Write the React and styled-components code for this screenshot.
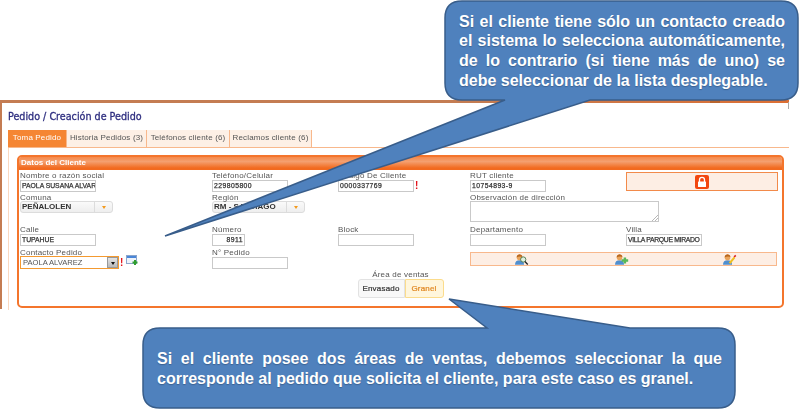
import React from "react";
import styled, { createGlobalStyle } from "styled-components";

const Global = createGlobalStyle`
  html, body { margin: 0; padding: 0; background: #fff; }
  * { box-sizing: border-box; }
`;

const Page = styled.div`
  position: relative;
  width: 800px;
  height: 409px;
  overflow: hidden;
  padding-top: 100px;
  font-family: "Liberation Sans", Arial, sans-serif;
  font-size: 8px;
  color: #444;
`;

const Screen = styled.div`
  position: relative;
  width: 789px;
  height: 209px;
  border-left: 2px solid #c47c52;
  border-top: 3px solid transparent;
  border-image: linear-gradient(90deg, #c47c52 60%, #dd6f33 100%) 1;
  padding-left: 6px;
  filter: blur(0.3px);
  &::before {
    content: "";
    position: absolute;
    left: 708px;
    top: -3px;
    width: 10px;
    height: 3px;
    background: #b9652e;
  }
  &::after {
    content: "";
    position: absolute;
    right: 0;
    top: -1px;
    width: 1px;
    height: 7px;
    background: #aaa;
  }
`;

const Title = styled.h1`
  margin: 0;
  height: 27px;
  padding-top: 8px;
  font-family: "DejaVu Sans", Verdana, sans-serif;
  font-size: 9.6px;
  line-height: 12px;
  font-weight: 400;
  color: #2f2f80;
  -webkit-text-stroke: 0.3px #2f2f80;
`;

const Tabs = styled.div`
  display: flex;
  height: 18px;
  border-bottom: 1px solid #f8b88c;
`;

const Tab = styled.div`
  width: ${(p) => p.$w}px;
  height: 17px;
  line-height: 16px;
  text-align: center;
  font-size: 8px;
  letter-spacing: 0.15px;
  color: ${(p) => (p.$active ? "#fff" : "#555")};
  background: ${(p) => (p.$active ? "#f58634" : "#fdf0e6")};
  border-right: 1px solid #f8b88c;
`;

const TabBody = styled.div`
  height: 162px;
  border-left: 1px solid #fad9c1;
  padding: 7px 0 0 8px;
`;

const Card = styled.section`
  width: 767px;
  height: 153px;
  border: 2px solid #f4752c;
  border-radius: 5px;
  background: #fff;
`;

const CardHead = styled.div`
  height: 13px;
  padding-left: 2px;
  border-radius: 2px 2px 0 0;
  background: linear-gradient(#f6894a, #f4a070 35%, #f26a1f 85%);
  color: #fff;
  font-size: 8px;
  font-weight: 700;
  line-height: 11px;
`;

const FormGrid = styled.div`
  display: grid;
  grid-template-columns: 192px 126px 132px 156px 152px;
  grid-template-rows: 22px 32px 23px 23px;
  padding-left: 1px;
`;

const Field = styled.div`
  grid-column: ${(p) => p.$col} / span ${(p) => p.$span || 1};
  grid-row: ${(p) => p.$row};
  min-width: 0;
`;

const Label = styled.div`
  height: 10px;
  padding-top: 1px;
  line-height: 10px;
  font-size: 8px;
  letter-spacing: 0.2px;
  color: #555;
  white-space: nowrap;
`;

const InputRow = styled.div`
  display: flex;
  align-items: flex-start;
  gap: 1px;
`;

const Input = styled.div`
  width: ${(p) => p.$w || 76}px;
  height: 12px;
  border: 1px solid #c9c9c9;
  padding: 0 1px;
  background: #fff;
  color: #333;
  font-size: 6.8px;
  letter-spacing: ${(p) => p.$track || 0}px;
  -webkit-text-stroke: 0.25px #333;
  line-height: 10px;
  white-space: nowrap;
  overflow: hidden;
  text-align: ${(p) => p.$align || "left"};
`;

const Required = styled.span`
  color: #e3141c;
  font-size: 10px;
  font-weight: 700;
  line-height: 11px;
`;

const Combo = styled.div`
  display: flex;
  width: 93px;
  height: 12px;
  margin-top: -1px;
  border: 1px solid #dcdcdc;
  border-radius: 3px;
  background: linear-gradient(#fafafa, #eee);
  color: #333;
  font-size: 8px;
  font-weight: 700;
  line-height: 10px;
  padding-left: 1px;
`;

const ComboText = styled.span`
  flex: 1;
  white-space: nowrap;
`;

const ComboArrow = styled.span`
  width: 18px;
  display: flex;
  align-items: center;
  justify-content: center;
  border-left: 1px solid #dcdcdc;
  &::after {
    content: "";
    border: 2.5px solid transparent;
    border-top: 3px solid #f39a1e;
    margin-top: 3px;
  }
`;

const TextArea = styled.div`
  position: relative;
  width: 189px;
  height: 21px;
  margin-top: -1px;
  border: 1px solid #c9c9c9;
  background: #fff;
`;

const Grip = styled.svg`
  position: absolute;
  right: 0;
  bottom: 0;
`;

const LockBox = styled.div`
  grid-column: 5;
  grid-row: 1;
  width: 152px;
  height: 19px;
  margin-top: 2px;
  display: flex;
  align-items: center;
  justify-content: center;
  border: 1px solid #f28a4a;
  background: #fdeee4;
`;

const Select = styled.div`
  display: flex;
  width: 99px;
  height: 13px;
  margin-top: -1px;
  border: 1px solid #f49a30;
  background: #fff;
  color: #555;
  font-size: 7.6px;
  line-height: 11px;
  padding-left: 2px;
  white-space: nowrap;
`;

const SelectText = styled.span`
  flex: 1;
`;

const SelectButton = styled.span`
  width: 11px;
  display: flex;
  align-items: center;
  justify-content: center;
  background: linear-gradient(#e4e4e4, #b9b9b9);
  border: 1px solid #999;
  &::after {
    content: "";
    border: 2.5px solid transparent;
    border-top: 3px solid #111;
    margin-top: 3px;
  }
`;

const AddIcon = styled.svg`
  margin-left: 2px;
  margin-top: -2px;
`;

const ActionBar = styled.div`
  grid-column: 4 / span 2;
  grid-row: 4;
  width: 307px;
  height: 14px;
  margin-top: 5px;
  padding-left: 44px;
  display: grid;
  grid-template-columns: 100px 108px 1fr;
  align-items: center;
  justify-items: start;
  border: 1px solid #f8b88c;
  background: #fdeee4;
`;

const AreaBlock = styled.div`
  display: flex;
  flex-direction: column;
  align-items: center;
`;

const AreaLabel = styled.div`
  height: 9px;
  line-height: 9px;
  font-size: 8px;
  letter-spacing: 0.2px;
  color: #555;
`;

const Segments = styled.div`
  display: flex;
  height: 19px;
`;

const Segment = styled.div`
  width: ${(p) => p.$w}px;
  line-height: 17px;
  text-align: center;
  font-size: 8px;
  letter-spacing: 0.2px;
  -webkit-text-stroke: 0.2px ${(p) => (p.$on ? "#e0861e" : "#333")};
  border: 1px solid ${(p) => (p.$on ? "#fbdc8c" : "#e2e2e2")};
  border-radius: ${(p) => (p.$on ? "0 3px 3px 0" : "3px 0 0 3px")};
  background: ${(p) => (p.$on ? "#fff6dc" : "#f8f8f8")};
  color: ${(p) => (p.$on ? "#e0861e" : "#333")};
`;

const Overlay = styled.svg`
  position: absolute;
  inset: 0;
  width: 800px;
  height: 409px;
`;

const CalloutText = styled.p`
  position: absolute;
  left: ${(p) => p.$x}px;
  top: ${(p) => p.$y}px;
  width: ${(p) => p.$w}px;
  margin: 0;
  color: #fff;
  font-family: "Liberation Sans", Arial, sans-serif;
  font-weight: 700;
  font-size: ${(p) => p.$size}px;
  line-height: 19.7px;
  text-align: justify;
  text-shadow: 0 1px 1px rgba(30, 50, 80, 0.4);
`;

const Person = ({ children }) => (
  <svg width="14" height="11" viewBox="0 0 17 13">
    <path d="M0 13c0-4 2-5.500 5.500-5.500S11 9 11 13z" fill="#4f8fd0" />
    <circle cx="5.500" cy="4" r="3.400" fill="#e9a45c" />
    <path d="M2 4C2 1 4 0 5.500 0S9 1 9 3.500C7.500 2.500 4 2.500 2 4z" fill="#b8661c" />
    {children}
  </svg>
);

const App = () => (
  <>
    <Global />
    <Page>
      <Screen>
        <Title>Pedido / Creación de Pedido</Title>
        <Tabs>
          <Tab $w={59} $active>Toma Pedido</Tab>
          <Tab $w={80}>Historia Pedidos (3)</Tab>
          <Tab $w={83}>Teléfonos cliente (6)</Tab>
          <Tab $w={82}>Reclamos cliente (6)</Tab>
        </Tabs>
        <TabBody>
          <Card>
            <CardHead>Datos del Cliente</CardHead>
            <FormGrid>
              <Field $col={1} $row={1}>
                <Label>Nombre o razón social</Label>
                <Input>PAOLA SUSANA ALVAR</Input>
              </Field>
              <Field $col={2} $row={1}>
                <Label>Teléfono/Celular</Label>
                <Input $track={0.45}>229805800</Input>
              </Field>
              <Field $col={3} $row={1}>
                <Label>Código De Cliente</Label>
                <InputRow>
                  <Input $track={0.45}>0000337769</Input>
                  <Required>!</Required>
                </InputRow>
              </Field>
              <Field $col={4} $row={1}>
                <Label>RUT cliente</Label>
                <Input $track={0.45}>10754893-9</Input>
              </Field>
              <LockBox>
                <svg width="14" height="14" viewBox="0 0 14 14">
                  <rect width="14" height="14" rx="2" fill="#f2470f" />
                  <path d="M4.500 7V4.800a2.500 2.500 0 0 1 5 0V7" fill="none" stroke="#fff" strokeWidth="1.300" />
                  <rect x="3" y="6.500" width="8" height="5.500" rx="0.600" fill="#fff" />
                </svg>
              </LockBox>

              <Field $col={1} $row={2}>
                <Label>Comuna</Label>
                <Combo><ComboText>PEÑALOLEN</ComboText><ComboArrow /></Combo>
              </Field>
              <Field $col={2} $row={2}>
                <Label>Región</Label>
                <Combo><ComboText>RM - SANTIAGO</ComboText><ComboArrow /></Combo>
              </Field>
              <Field $col={4} $span={2} $row={2}>
                <Label>Observación de dirección</Label>
                <TextArea>
                  <Grip width="6" height="6" viewBox="0 0 6 6">
                    <path d="M6 0L0 6M6 3L3 6" stroke="#999" strokeWidth="0.700" />
                  </Grip>
                </TextArea>
              </Field>

              <Field $col={1} $row={3}>
                <Label>Calle</Label>
                <Input>TUPAHUE</Input>
              </Field>
              <Field $col={2} $row={3}>
                <Label>Número</Label>
                <Input $w={33} $align="right" $track={0.45}>8911</Input>
              </Field>
              <Field $col={3} $row={3}>
                <Label>Block</Label>
                <Input />
              </Field>
              <Field $col={4} $row={3}>
                <Label>Departamento</Label>
                <Input />
              </Field>
              <Field $col={5} $row={3}>
                <Label>Villa</Label>
                <Input $track={-0.3}>VILLA PARQUE MIRADO</Input>
              </Field>

              <Field $col={1} $row={4}>
                <Label>Contacto Pedido</Label>
                <InputRow>
                  <Select><SelectText>PAOLA ALVAREZ</SelectText><SelectButton /></Select>
                  <Required>!</Required>
                  <AddIcon width="12" height="11" viewBox="0 0 12 11">
                    <rect x="0.500" y="0.500" width="10" height="8" fill="#eef3fa" stroke="#8ba6cc" />
                    <rect x="1" y="1" width="9" height="2" fill="#4a86d8" />
                    <path d="M6.500 7.500h5M9 5v5" stroke="#2f9e2f" strokeWidth="2" fill="none" />
                  </AddIcon>
                </InputRow>
              </Field>
              <Field $col={2} $row={4}>
                <Label>N° Pedido</Label>
                <Input />
              </Field>
              <ActionBar>
                <Person>
                  <circle cx="10" cy="6.500" r="3.200" fill="#dff0df" stroke="#3d6b3d" />
                  <path d="M12 9l3.500 3.500" stroke="#222" strokeWidth="1.600" />
                </Person>
                <Person>
                  <path d="M12 4v7.500M8 7.700h8" stroke="#58b858" strokeWidth="3" />
                </Person>
                <Person>
                  <path d="M8 11l6-7" stroke="#f0c020" strokeWidth="2.500" />
                  <path d="M13.500 3.500l2-2" stroke="#d22" strokeWidth="2" />
                </Person>
              </ActionBar>
            </FormGrid>
            <AreaBlock>
              <AreaLabel>Área de ventas</AreaLabel>
              <Segments>
                <Segment $w={47}>Envasado</Segment>
                <Segment $w={39} $on>Granel</Segment>
              </Segments>
            </AreaBlock>
          </Card>
        </TabBody>
      </Screen>

      <Overlay viewBox="0 0 800 409">
        <path
          d="M462 1H781Q798 1 798 18V83Q798 100 781 100H590L165 236L505 100H462Q445 100 445 83V18Q445 1 462 1Z"
          fill="#4f81bd"
          stroke="#385d8a"
          strokeWidth="1.500"
        />
        <path
          d="M160 328H487L449 299L630 328H718Q735 328 735 345V391Q735 408 718 408H160Q143 408 143 391V345Q143 328 160 328Z"
          fill="#4f81bd"
          stroke="#385d8a"
          strokeWidth="1.500"
        />
      </Overlay>
      <CalloutText $x={459} $y={11.500} $w={326} $size={16}>
        Si el cliente tiene sólo un contacto creado el sistema lo selecciona automáticamente, de lo contrario (si tiene más de uno) se debe seleccionar de la lista desplegable.
      </CalloutText>
      <CalloutText $x={157} $y={349} $w={565} $size={16}>
        Si el cliente posee dos áreas de ventas, debemos seleccionar la que corresponde al pedido que solicita el cliente, para este caso es granel.
      </CalloutText>
    </Page>
  </>
);

export default App;
